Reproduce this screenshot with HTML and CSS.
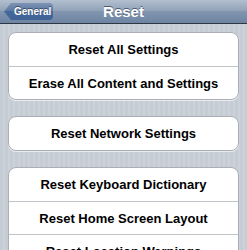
FILE: index.html
```html
<!DOCTYPE html>
<html lang="en">

<head>
    <meta charset="UTF-8">
    <meta name="viewport" content="width=device-width, initial-scale=1.0">
    <title>Reset</title>
    <link rel="stylesheet" href="styles.css">
</head>

<body>
    <div class="nav">
        <div class="back">General</div>
        <div class="title">Reset</div>
    </div>

    <div class="content">
        <ul class="group">
            <li>Reset All Settings</li>
            <li>Erase All Content and Settings</li>
        </ul>
        <ul class="group">
            <li>Reset Network Settings</li>
        </ul>
        <ul class="group">
            <li>Reset Keyboard Dictionary</li>
            <li>Reset Home Screen Layout</li>
            <li>Reset Location Warnings</li>
        </ul>
    </div>
</body>

</html>
```

FILE: styles.css
```css
* {
    margin: 0;
    padding: 0;
    box-sizing: border-box;
    font-family: 'Liberation Sans', Arial, sans-serif;
}

body {
    width: 247px;
    height: 250px;
    overflow: hidden;
    background: repeating-linear-gradient(90deg, #c5ccd4 0, #c5ccd4 3px, #cbd2d9 3px, #cbd2d9 5px);
}

.nav {
    height: 24px;
    position: relative;
    display: flex;
    align-items: center;
    justify-content: center;
    background: linear-gradient(#b3bfcf 0%, #8ea0b7 50%, #8195af 50%, #6d84a2 100%);
    border-bottom: 1px solid #2d3642;
}

.title {
    color: #fff;
    font-size: 15px;
    font-weight: bold;
    text-shadow: 0 -1px 0 #4a5a72;
}

.back {
    position: absolute;
    left: 4px;
    top: 3px;
    height: 17px;
    width: 49px;
    padding-left: 10px;
    display: flex;
    align-items: center;
    color: #fff;
    font-size: 10px;
    font-weight: bold;
    text-shadow: 0 -1px 0 #3b4b63;
    background: linear-gradient(#7d93b3 0%, #5877a3 50%, #45689a 50%, #3f6397 100%);
    clip-path: polygon(0 50%, 7px 0, 100% 0, 100% 100%, 7px 100%);
    border-radius: 0 4px 4px 0;
}

.content {
    padding: 8px 8px 0;
    display: flex;
    flex-direction: column;
    gap: 16px;
}

.group {
    list-style: none;
    background: #fff;
    border: 1px solid #abafb5;
    border-radius: 8px;
    box-shadow: 0 1px 0 rgba(255, 255, 255, 0.6);
    overflow: hidden;
}

.group li {
    height: 33px;
    display: flex;
    align-items: center;
    justify-content: center;
    font-size: 13px;
    font-weight: bold;
    color: #000;
}

.group li + li {
    border-top: 1px solid #c0c3c7;
}
```
